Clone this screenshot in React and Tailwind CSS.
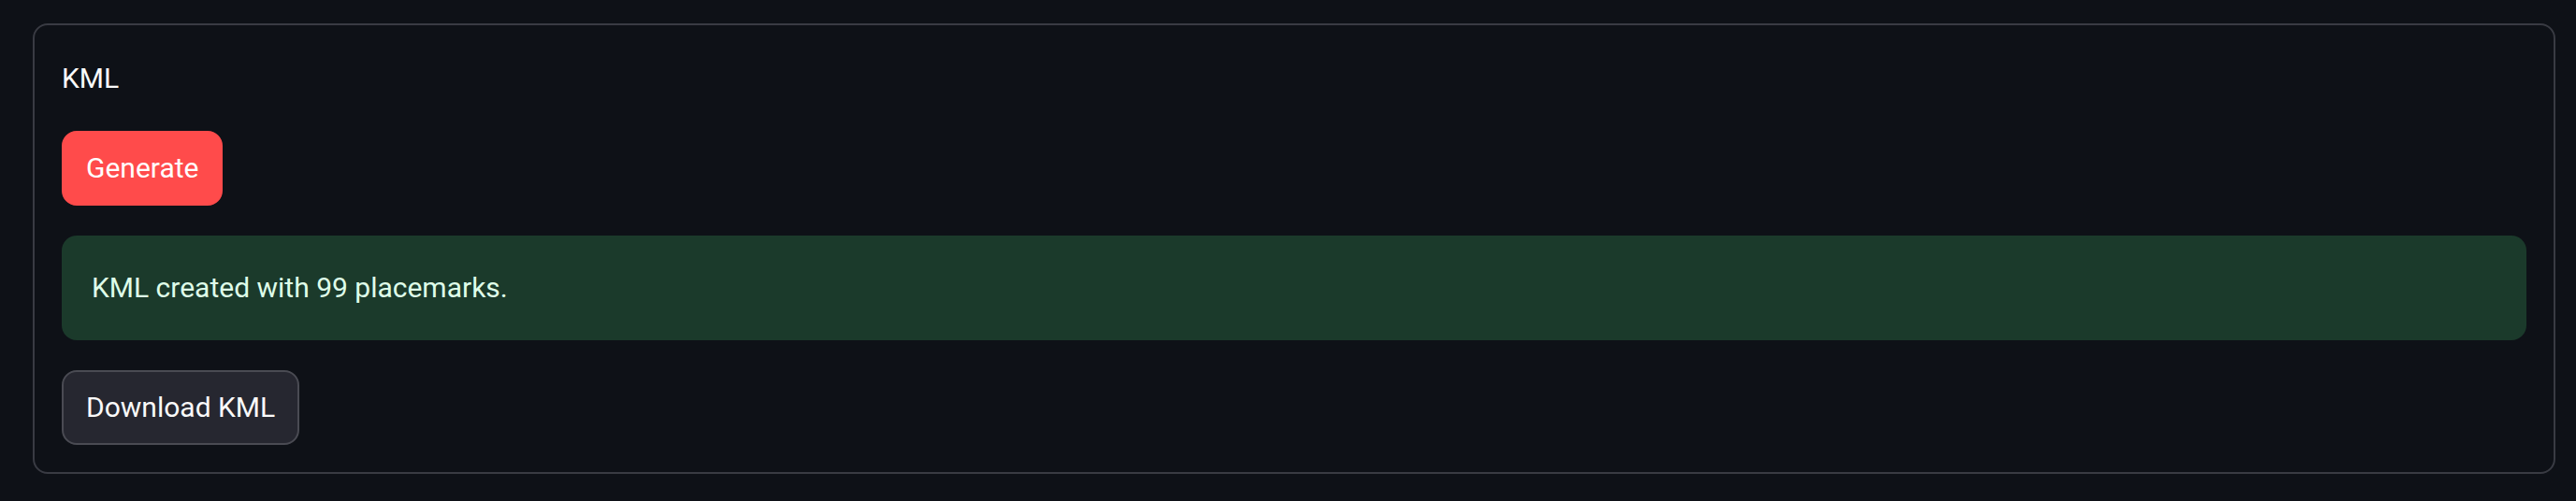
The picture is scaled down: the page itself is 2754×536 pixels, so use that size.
import React from 'react';

export default function App() {
  return (
    <div className="min-h-[536px] w-full bg-[#0e1117] pl-[35px] pr-[22px] pt-[25px] font-['Roboto',sans-serif] text-[30px] leading-[48px] text-[#fafafa]">
      <div className="flex flex-col gap-[32px] rounded-[16px] border-2 border-[#393b43] px-[29px] pt-[33px] pb-[29px]">
        <div className="h-[48px]">KML</div>

        <div>
          <button className="h-[80px] rounded-[16px] border-2 border-[#ff4b4b] bg-[#ff4b4b] px-[24px] text-white">
            Generate
          </button>
        </div>

        <div className="rounded-[16px] bg-[#1b3a2b] px-[32px] py-[32px] text-[#dffde9]">
          KML created with 99 placemarks.
        </div>

        <div>
          <button className="h-[80px] rounded-[16px] border-2 border-[#4a4b53] bg-[#262730] px-[24px] text-[#fafafa]">
            Download KML
          </button>
        </div>
      </div>
    </div>
  );
}
